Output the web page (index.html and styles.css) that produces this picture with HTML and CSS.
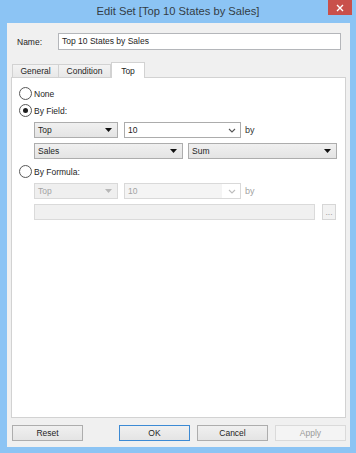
FILE: index.html
```html
<!DOCTYPE html>
<html lang="en">
<head>
    <meta charset="UTF-8" />
    <meta name="viewport" content="width=device-width, initial-scale=1.0" />
    <link rel="stylesheet" href="styles.css">
    <title>Edit Set</title>
</head>
<body>
    <div class="window">
        <div class="titlebar">
            <span class="title">Edit Set [Top 10 States by Sales]</span>
            <span class="close">
                <svg width="8" height="8" viewBox="0 0 8 8"><path d="M1 1l6 6M7 1l-6 6" stroke="#fff" stroke-width="1.4" fill="none"/></svg>
            </span>
        </div>

        <div class="client">
            <div class="name-row">
                <label class="name-label">Name:</label>
                <div class="textbox">Top 10 States by Sales</div>
            </div>

            <div class="tabs">
                <div class="tab tab-general">General</div>
                <div class="tab tab-condition">Condition</div>
                <div class="tab tab-top active">Top</div>
            </div>

            <div class="panel">
                <div class="option"><span class="radio"></span>None</div>

                <div class="option option-field"><span class="radio checked"></span>By Field:</div>
                <div class="field-row first">
                    <div class="dropdown w-top"><span>Top</span><svg width="7" height="4" viewBox="0 0 7 4"><path d="M0 0h7L3.5 4z" fill="#111"/></svg></div>
                    <div class="combo w-count"><span>10</span><svg width="8" height="5" viewBox="0 0 8 5"><path d="M1 1l3 3 3-3" stroke="#555" stroke-width="1.1" fill="none"/></svg></div>
                    <span class="by">by</span>
                </div>
                <div class="field-row">
                    <div class="dropdown w-half"><span>Sales</span><svg width="7" height="4" viewBox="0 0 7 4"><path d="M0 0h7L3.5 4z" fill="#111"/></svg></div>
                    <div class="dropdown w-half"><span>Sum</span><svg width="7" height="4" viewBox="0 0 7 4"><path d="M0 0h7L3.5 4z" fill="#111"/></svg></div>
                </div>

                <div class="option option-formula"><span class="radio"></span>By Formula:</div>
                <div class="field-row first disabled">
                    <div class="dropdown w-top"><span>Top</span><svg width="7" height="4" viewBox="0 0 7 4"><path d="M0 0h7L3.5 4z" fill="#b8b8b8"/></svg></div>
                    <div class="combo w-count"><span>10</span><svg width="8" height="5" viewBox="0 0 8 5"><path d="M1 1l3 3 3-3" stroke="#bdbdbd" stroke-width="1.1" fill="none"/></svg></div>
                    <span class="by">by</span>
                </div>
                <div class="field-row formula-row disabled">
                    <div class="formula-box"></div>
                    <div class="dots">...</div>
                </div>
            </div>

            <div class="buttons">
                <div class="btn">Reset</div>
                <div class="spacer"></div>
                <div class="btn default">OK</div>
                <div class="btn">Cancel</div>
                <div class="btn off">Apply</div>
            </div>
        </div>
    </div>
</body>
</html>
```

FILE: styles.css
```css
* {
    box-sizing: border-box;
    margin: 0;
    padding: 0;
}
body {
    font-family: "Liberation Sans", Arial, sans-serif;
    font-size: 8.5px;
    color: #1e1e1e;
}
.window {
    width: 356px;
    height: 453px;
    background-color: #8cc4f4;
    display: flex;
    flex-direction: column;
}
.titlebar {
    position: relative;
    height: 23px;
    display: flex;
    align-items: center;
    justify-content: center;
    padding-bottom: 1px;
}
.title {
    font-size: 11.2px;
    color: #333c44;
}
.close {
    position: absolute;
    top: 0;
    right: 4px;
    width: 24px;
    height: 15px;
    background-color: #c9504b;
    display: flex;
    align-items: center;
    justify-content: center;
}
.client {
    flex: 1;
    margin: 0 6px 6px 7px;
    background-color: #f0f0f0;
    display: flex;
    flex-direction: column;
    padding: 10px 4px 6px 4px;
}
.name-row {
    display: flex;
    align-items: center;
    height: 17px;
    padding: 0 5px 0 6px;
}
.name-label {
    width: 41px;
}
.textbox {
    flex: 1;
    height: 17px;
    line-height: 15px;
    padding-left: 3px;
    background-color: #fff;
    border: 1px solid #b4b6ba;
}
.tabs {
    display: flex;
    align-items: flex-end;
    height: 16px;
    margin: 12px 0 -1px 1px;
    position: relative;
    z-index: 1;
}
.tab {
    height: 14px;
    line-height: 13px;
    text-align: center;
    background: linear-gradient(#f3f3f3, #e8e8e8);
    border: 1px solid #d2d2d2;
}
.tab-general {
    width: 47px;
}
.tab-condition {
    width: 53px;
    margin-left: -1px;
}
.tab-top {
    width: 34px;
}
.tab.active {
    height: 16px;
    line-height: 16px;
    background: #fff;
    border-bottom: none;
}
.panel {
    flex: 1;
    background-color: #fff;
    border: 1px solid #d2d2d2;
    padding: 9px 7px 0 7px;
    display: flex;
    flex-direction: column;
}
.option {
    display: flex;
    align-items: center;
    gap: 2px;
    height: 13px;
}
.option-field {
    margin-top: 4px;
}
.option-formula {
    margin-top: 6px;
}
.radio {
    width: 13px;
    height: 13px;
    border: 1px solid #585858;
    border-radius: 50%;
    background: radial-gradient(circle, #fff 55%, #f1f1f1);
    display: flex;
    align-items: center;
    justify-content: center;
}
.radio.checked::after {
    content: "";
    width: 5px;
    height: 5px;
    border-radius: 50%;
    background-color: #1e1e1e;
}
.field-row {
    display: flex;
    align-items: center;
    gap: 5px;
    height: 16px;
    margin: 5px 0 0 15px;
}
.dropdown,
.combo {
    height: 16px;
    display: flex;
    align-items: center;
    justify-content: space-between;
    padding: 0 5px 0 3px;
}
.dropdown {
    background: linear-gradient(#f0f0f0, #e4e4e4);
    border: 1px solid #adadad;
}
.combo {
    background-color: #fff;
    border: 1px solid #acacac;
    padding-right: 4px;
}
.w-top {
    width: 84px;
}
.w-count {
    width: 117px;
    margin-left: 1px;
}
.w-half {
    width: 149px;
}
.by {
    margin-left: -1px;
    color: #333;
    font-size: 9px;
}
.disabled .dropdown {
    background: #efefef;
    border-color: #d9d9d9;
    color: #a3a3a3;
}
.disabled .combo {
    background: linear-gradient(to right, #f4f4f4 84%, #fff 84%);
    border-color: #d9d9d9;
    color: #a3a3a3;
}
.disabled .by {
    color: #a3a3a3;
}
.formula-row {
    gap: 7px;
}
.formula-box {
    width: 281px;
    height: 16px;
    background-color: #f0f0f0;
    border: 1px solid #dadada;
}
.dots {
    width: 14px;
    height: 16px;
    line-height: 14px;
    text-align: center;
    background-color: #f2f2f2;
    border: 1px solid #d6d6d6;
    color: #9a9a9a;
}
.buttons {
    display: flex;
    gap: 7px;
    height: 16px;
    margin-top: 7px;
    padding-left: 1px;
}
.spacer {
    flex: 1;
}
.btn {
    width: 71px;
    height: 16px;
    line-height: 14px;
    text-align: center;
    background: linear-gradient(#f0f0f0, #e4e4e4);
    border: 1px solid #adadad;
}
.btn.default {
    border-color: #3c8ad4;
}
.btn.off {
    background: #f4f4f4;
    border-color: #dadada;
    color: #9a9a9a;
}
```
